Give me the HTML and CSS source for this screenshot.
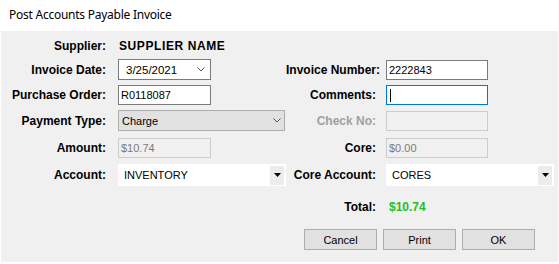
FILE: index.html
```html
<!DOCTYPE html>
<html>
<head>
<meta charset="utf-8">
<link rel="stylesheet" href="styles.css">
</head>
<body>
<div class="window">
  <div class="title">Post Accounts Payable Invoice</div>
  <div class="panel">
    <div class="lbl l1">Supplier:</div>
    <div class="supplier">SUPPLIER NAME</div>

    <div class="lbl l1">Invoice Date:</div>
    <div class="cell"><div class="date"><span>3/25/2021</span><svg class="chev" width="8" height="5" viewBox="0 0 8 5"><polyline points="0.5,0.5 4,4 7.5,0.5" fill="none" stroke="#555" stroke-width="1"/></svg></div></div>
    <div class="lbl l2">Invoice Number:</div>
    <div class="cell"><div class="tb">2222843</div></div>

    <div class="lbl l1">Purchase Order:</div>
    <div class="cell"><div class="tb short">R0118087</div></div>
    <div class="lbl l2">Comments:</div>
    <div class="cell"><div class="tb focus"><span class="caret"></span></div></div>

    <div class="lbl l1">Payment Type:</div>
    <div class="cell"><div class="combo"><span>Charge</span><svg class="chev" width="8" height="5" viewBox="0 0 8 5"><polyline points="0.5,0.5 4,4 7.5,0.5" fill="none" stroke="#555" stroke-width="1"/></svg></div></div>
    <div class="lbl l2 disabled">Check No:</div>
    <div class="cell"><div class="tb off"></div></div>

    <div class="lbl l1">Amount:</div>
    <div class="cell"><div class="tb off short">$10.74</div></div>
    <div class="lbl l2">Core:</div>
    <div class="cell"><div class="tb off">$0.00</div></div>

    <div class="lbl l1">Account:</div>
    <div class="cell"><div class="flat"><span>INVENTORY</span><span class="btn-arrow"><svg width="7" height="4" viewBox="0 0 7 4"><polygon points="0,0 7,0 3.5,4" fill="#000"/></svg></span></div></div>
    <div class="lbl l2">Core Account:</div>
    <div class="cell"><div class="flat"><span>CORES</span><span class="btn-arrow"><svg width="7" height="4" viewBox="0 0 7 4"><polygon points="0,0 7,0 3.5,4" fill="#000"/></svg></span></div></div>

    <div class="spacer"></div>
    <div class="lbl l2 total-lbl">Total:</div>
    <div class="total">$10.74</div>

    <div class="buttons">
      <button class="btn">Cancel</button>
      <button class="btn">Print</button>
      <button class="btn">OK</button>
    </div>
  </div>
</div>
</body>
</html>
```

FILE: styles.css
```css
html, body {
  margin: 0;
  padding: 0;
  background: #ffffff;
}

.window {
  width: 559px;
  height: 264px;
  background: #ffffff;
}

.title {
  height: 31px;
  box-sizing: border-box;
  padding: 7px 0 0 9px;
  font-family: "Noto Sans", "Open Sans", sans-serif;
  font-size: 12px;
  line-height: 16px;
  letter-spacing: -0.25px;
  color: #000;
}

.panel {
  margin-left: 1px;
  width: 557px;
  height: 231px;
  box-sizing: border-box;
  background: #f0f0f0;
  padding-top: 5px;
  display: grid;
  grid-template-columns: 117px 168px 100px 168px;
  grid-template-rows: 20px 27px 24px 27px 27px 28px 36px 29px;
  align-items: center;
  font-family: "Liberation Sans", Arial, sans-serif;
}

.lbl {
  font-weight: bold;
  font-size: 12px;
  color: #000;
  text-align: right;
  white-space: nowrap;
}

.l1 {
  padding-right: 12px;
}

.l2 {
  padding-right: 10px;
}

.disabled {
  color: #a0a0a0;
}

.supplier {
  grid-column: 2 / 5;
  font-weight: bold;
  font-size: 12px;
  letter-spacing: 0.6px;
  padding-left: 1px;
  color: #000;
}

.cell {
  display: flex;
  align-items: center;
}

.date {
  width: 93px;
  height: 21px;
  box-sizing: border-box;
  border: 1px solid #7a7a7a;
  background: #fff;
  display: flex;
  align-items: center;
  justify-content: space-between;
  padding: 0 5px 0 7px;
  font-size: 11.5px;
  color: #000;
}

.tb {
  width: 102px;
  height: 20px;
  box-sizing: border-box;
  border: 1px solid #7a7a7a;
  background: #fff;
  display: flex;
  align-items: center;
  padding-left: 2px;
  font-size: 11px;
  color: #000;
}

.tb.short {
  width: 93px;
}

.tb.focus {
  border-color: #0078d7;
}

.caret {
  display: block;
  width: 1px;
  height: 13px;
  background: #000;
  margin-left: 1px;
}

.tb.off {
  background: #f0f0f0;
  border-color: #cccccc;
  color: #7a7a7a;
}

.combo {
  width: 167px;
  height: 21px;
  box-sizing: border-box;
  border: 1px solid #adadad;
  background: #e1e1e1;
  display: flex;
  align-items: center;
  justify-content: space-between;
  padding: 0 3px 0 3px;
  font-size: 11px;
  color: #000;
}

.flat {
  width: 168px;
  height: 22px;
  box-sizing: border-box;
  background: #fff;
  display: flex;
  align-items: center;
  justify-content: space-between;
  padding: 0 2px 0 6px;
  font-size: 11px;
  color: #000;
}

.btn-arrow {
  width: 14px;
  height: 19px;
  background: #ececec;
  display: flex;
  align-items: center;
  justify-content: center;
}

.spacer {
  grid-column: 1 / 3;
}

.total-lbl {
  grid-column: 3;
}

.total {
  font-weight: bold;
  font-size: 12px;
  color: #1fc01f;
  padding-left: 3px;
}

.buttons {
  grid-column: 1 / 5;
  display: flex;
  justify-content: flex-end;
  gap: 6px;
  padding-right: 19px;
}

.btn {
  width: 73px;
  height: 21px;
  box-sizing: border-box;
  border: 1px solid #adadad;
  background: #e1e1e1;
  font-family: "Liberation Sans", Arial, sans-serif;
  font-size: 11px;
  color: #000;
  padding: 0;
  margin: 0;
}
```
